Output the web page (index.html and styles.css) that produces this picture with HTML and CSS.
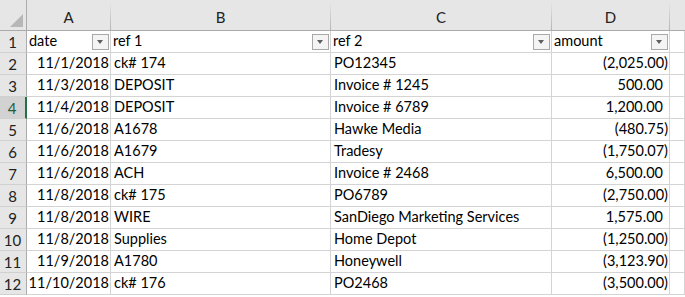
FILE: index.html
```html
<!DOCTYPE html>
<html>
<head>
<meta charset="utf-8">
<link rel="stylesheet" href="styles.css">
</head>
<body>
<div class="sheet">
  <div class="corner"><span class="tri"></span></div>
  <div class="ch">A</div>
  <div class="ch">B</div>
  <div class="ch">C</div>
  <div class="ch">D</div>
  <div class="ch ch-last"></div>

  <div class="rh">1</div>
  <div class="c hdr">date<span class="dd"></span></div>
  <div class="c hdr">ref 1<span class="dd"></span></div>
  <div class="c hdr">ref 2<span class="dd"></span></div>
  <div class="c hdr">amount<span class="dd"></span></div>
  <div class="c"></div>

  <div class="rh">2</div>
  <div class="c r">11/1/2018</div><div class="c">ck# 174</div><div class="c">PO12345</div><div class="c r">(2,025.00)</div><div class="c"></div>
  <div class="rh">3</div>
  <div class="c r">11/3/2018</div><div class="c">DEPOSIT</div><div class="c">Invoice # 1245</div><div class="c r pos">500.00</div><div class="c"></div>
  <div class="rh sel">4</div>
  <div class="c r">11/4/2018</div><div class="c">DEPOSIT</div><div class="c">Invoice # 6789</div><div class="c r pos">1,200.00</div><div class="c"></div>
  <div class="rh">5</div>
  <div class="c r">11/6/2018</div><div class="c">A1678</div><div class="c">Hawke Media</div><div class="c r">(480.75)</div><div class="c"></div>
  <div class="rh">6</div>
  <div class="c r">11/6/2018</div><div class="c">A1679</div><div class="c">Tradesy</div><div class="c r">(1,750.07)</div><div class="c"></div>
  <div class="rh">7</div>
  <div class="c r">11/6/2018</div><div class="c">ACH</div><div class="c">Invoice # 2468</div><div class="c r pos">6,500.00</div><div class="c"></div>
  <div class="rh">8</div>
  <div class="c r">11/8/2018</div><div class="c">ck# 175</div><div class="c">PO6789</div><div class="c r">(2,750.00)</div><div class="c"></div>
  <div class="rh">9</div>
  <div class="c r">11/8/2018</div><div class="c">WIRE</div><div class="c">SanDiego Marketing Services</div><div class="c r pos">1,575.00</div><div class="c"></div>
  <div class="rh">10</div>
  <div class="c r">11/8/2018</div><div class="c">Supplies</div><div class="c">Home Depot</div><div class="c r">(1,250.00)</div><div class="c"></div>
  <div class="rh">11</div>
  <div class="c r">11/9/2018</div><div class="c">A1780</div><div class="c">Honeywell</div><div class="c r">(3,123.90)</div><div class="c"></div>
  <div class="rh">12</div>
  <div class="c r">11/10/2018</div><div class="c">ck# 176</div><div class="c">PO2468</div><div class="c r">(3,500.00)</div><div class="c"></div>
</div>
</body>
</html>
```

FILE: styles.css
```css
html, body {
  margin: 0;
  padding: 0;
  background: #ffffff;
}

.sheet {
  display: grid;
  grid-template-columns: 27px 84px 220px 221px 118px 1fr;
  grid-template-rows: 31px repeat(12, 22px);
  font-family: Lato, "Open Sans", sans-serif;
  font-size: 14.5px;
  color: #000;
  width: 685px;
}

.corner {
  background: #e6e6e6;
  border-right: 1px solid #ababab;
  border-bottom: 1px solid #ababab;
  box-sizing: border-box;
  position: relative;
}

.tri {
  position: absolute;
  right: 3px;
  bottom: 3px;
  width: 0;
  height: 0;
  border-left: 13px solid transparent;
  border-bottom: 13px solid #b7b7b7;
}

.ch {
  background: #e6e6e6;
  border-right: 1px solid;
  border-image: linear-gradient(to bottom, #e6e6e6 10%, #b0b0b0 100%) 1;
  box-shadow: inset 0 -1px 0 #ababab;
  box-sizing: border-box;
  display: flex;
  align-items: flex-end;
  justify-content: center;
  padding-bottom: 5px;
  font-size: 15px;
  color: #222;
}

.ch-last {
  border-right: none;
}

.rh {
  background: #e6e6e6;
  border-right: 1px solid #ababab;
  border-bottom: 1px solid #d0d0d0;
  box-sizing: border-box;
  display: flex;
  align-items: center;
  justify-content: center;
  padding-right: 1px;
  font-size: 15px;
  color: #222;
}

.rh.sel {
  background: #d2d2d2;
  border-right: 2px solid #217346;
  color: #1f5c3a;
}

.c {
  border-right: 1px solid #d4d4d4;
  border-bottom: 1px solid #d4d4d4;
  box-sizing: border-box;
  display: flex;
  align-items: flex-end;
  padding: 0 2px 3px 3px;
  white-space: nowrap;
  overflow: visible;
  position: relative;
}

.c.r {
  justify-content: flex-end;
  padding-right: 1px;
}

.c.r.pos {
  padding-right: 6px;
}

.hdr {
  padding-left: 2px;
}

.dd {
  position: absolute;
  right: 1px;
  top: 3px;
  width: 15px;
  height: 14px;
  border: 1px solid #a8a8a8;
  background: #f4f4f4;
}

.dd::after {
  content: "";
  position: absolute;
  left: 4px;
  top: 5px;
  width: 0;
  height: 0;
  border-left: 3.5px solid transparent;
  border-right: 3.5px solid transparent;
  border-top: 4px solid #5f5f5f;
}
```
